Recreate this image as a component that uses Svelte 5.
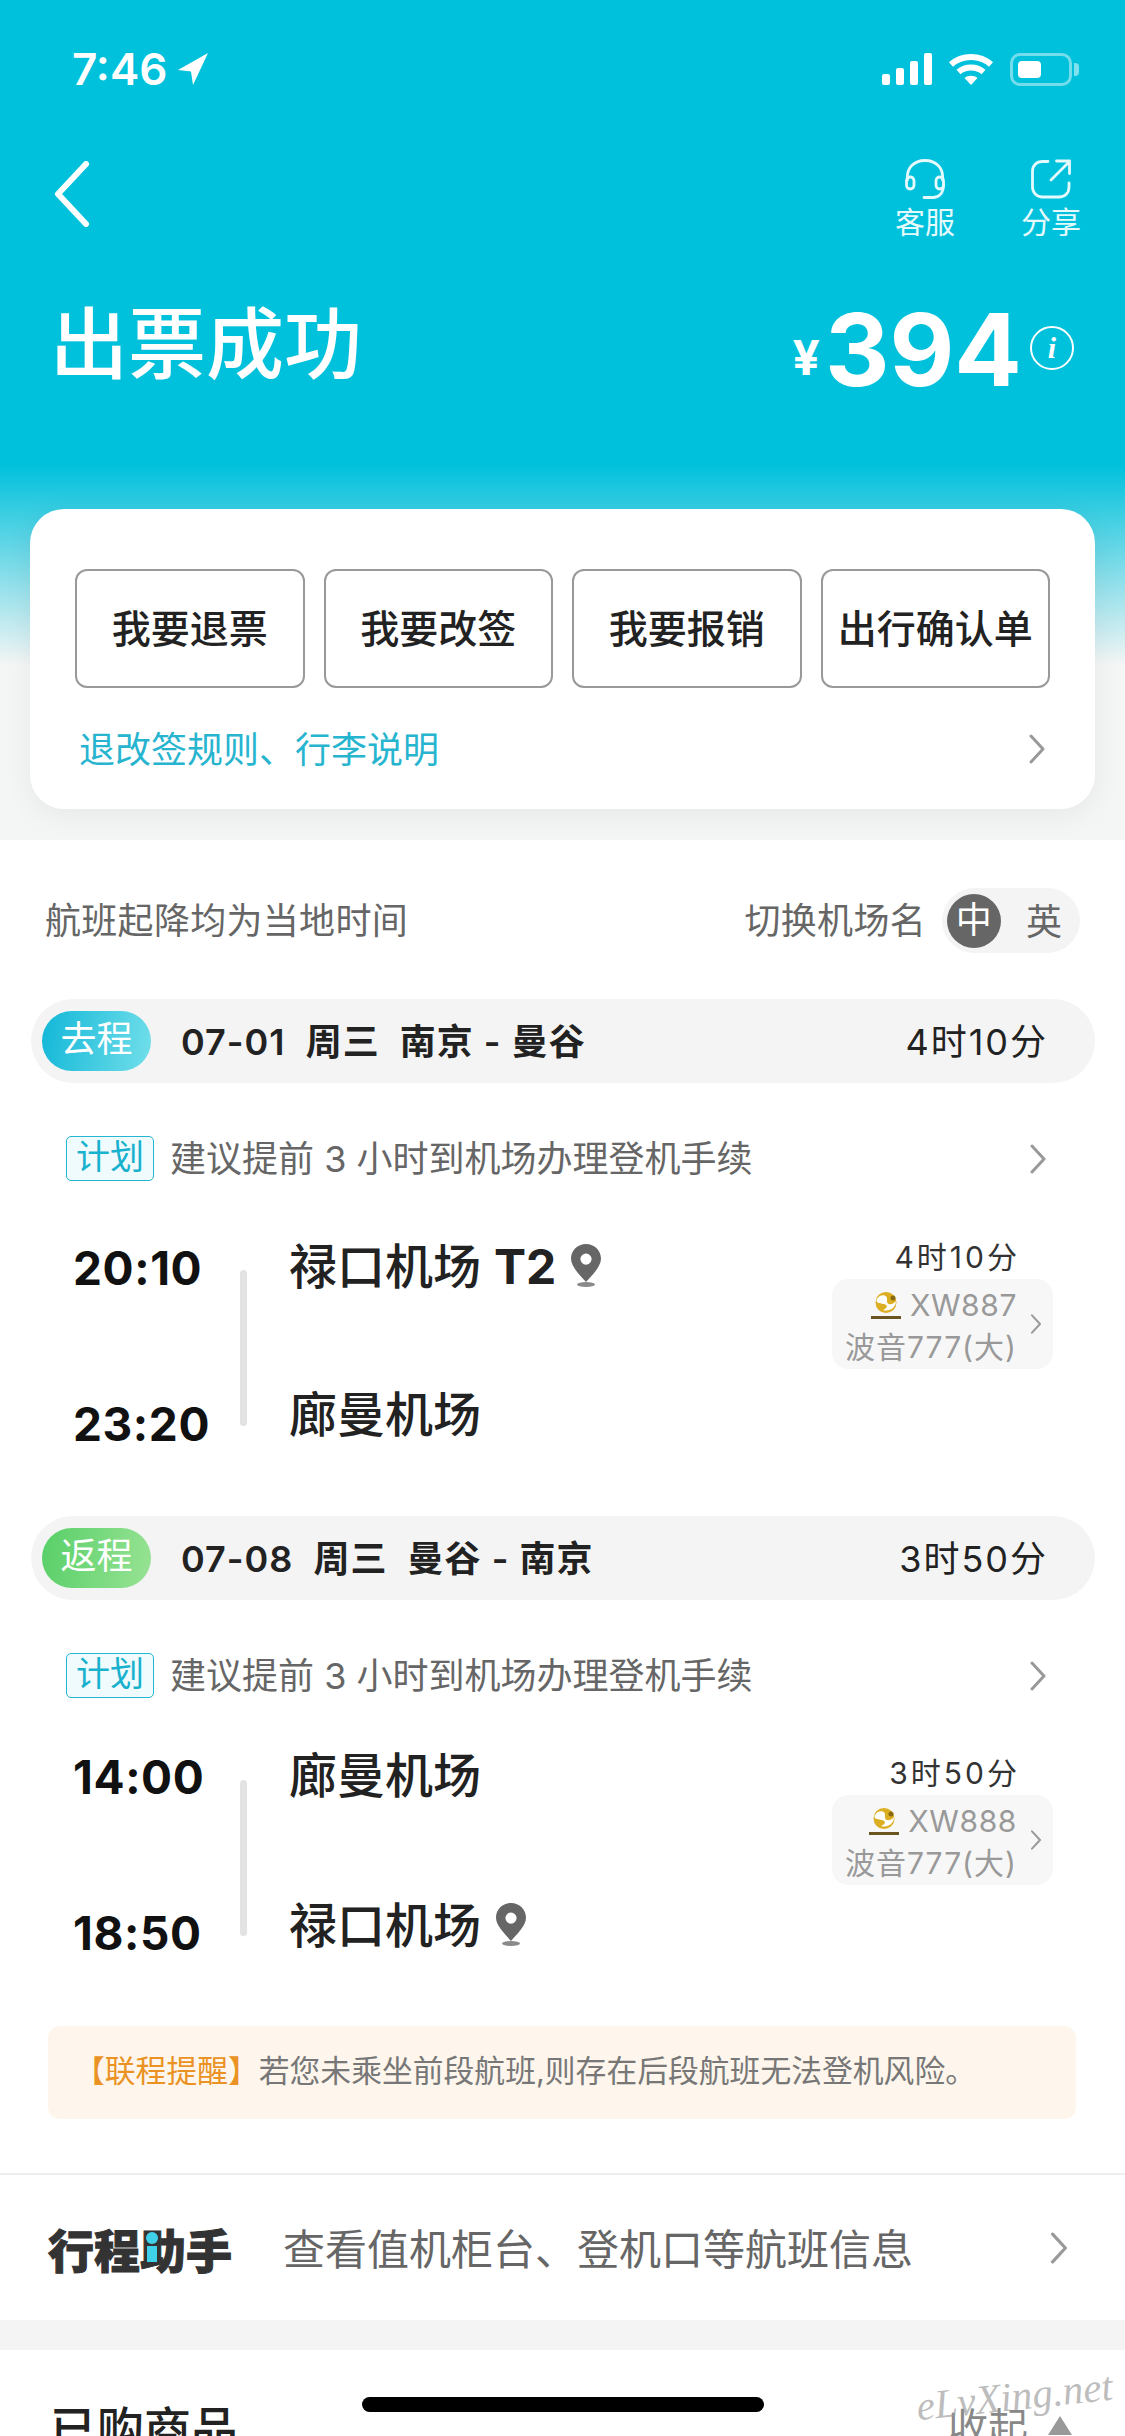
<script lang="ts">
	const actions = ['我要退票', '我要改签', '我要报销', '出行确认单'];
	const segments = [
		{
			key: 'out',
			tag: '去程',
			head: '07-01  周三  南京 - 曼谷',
			total: '4时10分',
			dep: '20:10',
			arr: '23:20',
			from: '禄口机场',
			term: 'T2',
			to: '廊曼机场',
			pinOn: 'from',
			no: 'XW887'
		},
		{
			key: 'ret',
			tag: '返程',
			head: '07-08  周三  曼谷 - 南京',
			total: '3时50分',
			dep: '14:00',
			arr: '18:50',
			from: '廊曼机场',
			term: '',
			to: '禄口机场',
			pinOn: 'to',
			no: 'XW888'
		}
	];
</script>

{#snippet chevron(cls)}
	<svg class={cls} viewBox="0 0 16 30" fill="none">
		<path d="M2 2l12 13L2 28" stroke="currentColor" stroke-width="3" stroke-linecap="round" stroke-linejoin="round" />
	</svg>
{/snippet}

{#snippet pin()}
	<svg class="pin" viewBox="0 0 32 44">
		<path
			fill-rule="evenodd"
			d="M16 1C7.5 1 1 7.6 1 15.6 1 24 10 32 16 39c6-7 15-15 15-23.4C31 7.6 24.5 1 16 1zm0 9.500a5.600 5.600 0 110 11.200 5.600 5.600 0 010-11.200z"
			fill="#666"
		/>
		<ellipse cx="16" cy="41.500" rx="9" ry="2.400" fill="#8a8a8a" />
	</svg>
{/snippet}

<div class="page">
	<header class="hero">
		<div class="status">
			<span class="clock">7:46</span>
			<svg class="loc" viewBox="0 0 30 32"><path d="M30 0L0 17l13 1.500L15 32z" fill="#fff" /></svg>
			<span class="spacer"></span>
			<svg class="signal" viewBox="0 0 50 32" fill="#fff">
				<rect x="0" y="21" width="8" height="11" rx="2" />
				<rect x="14" y="15" width="8" height="17" rx="2" />
				<rect x="28" y="8" width="8" height="24" rx="2" />
				<rect x="42" y="0" width="8" height="32" rx="2" />
			</svg>
			<svg class="wifi" viewBox="0 0 46 33" fill="none" stroke="#fff" stroke-width="6">
				<path d="M3 11.500c11-10 29-10 40 0" />
				<path d="M10.500 19c7-6 18-6 25 0" />
				<path d="M23 32l-6.500-7c3.500-3 9.500-3 13 0z" fill="#fff" stroke="none" />
			</svg>
			<div class="battery"><span class="level"></span></div>
		</div>

		<div class="nav">
			<svg class="nav-back" viewBox="0 0 38 66" fill="none">
				<path d="M34 3L6 33l28 30" stroke="#fff" stroke-width="6" stroke-linecap="round" stroke-linejoin="round" />
			</svg>
			<div class="tools">
				<div class="tool">
					<svg viewBox="0 0 40 40" fill="none" stroke="#e4fafd" stroke-width="2.800" stroke-linecap="round">
						<path d="M2.500 21C1 9 9 1.500 20 1.500S39 9 37.500 21" />
						<rect x="1.500" y="18" width="7.500" height="12" rx="3.700" />
						<rect x="31" y="18" width="7.500" height="12" rx="3.700" />
						<path d="M38.500 26c0 7.500-4 12-10 12.500H19" />
					</svg>
					<span>客服</span>
				</div>
				<div class="tool">
					<svg viewBox="0 0 40 40" fill="none" stroke="#e4fafd" stroke-width="2.800" stroke-linecap="round" stroke-linejoin="round">
						<path d="M17 2.500h-5.500C5.500 2.500 1.500 6.500 1.500 12v16c0 5.500 4 10 10 10H28c6 0 10-4 10-10v-4" />
						<path d="M20 21L38 3M25.500 2h13v12.500" />
					</svg>
					<span>分享</span>
				</div>
			</div>
		</div>

		<div class="summary">
			<h1>出票成功</h1>
			<div class="price">
				<span class="yen">¥</span><span class="amount">394</span>
				<span class="info">i</span>
			</div>
		</div>

		<section class="card">
			<div class="actions">
				{#each actions as a}
					<button>{a}</button>
				{/each}
			</div>
			<div class="rules">
				<span class="lift">退改签规则、行李说明</span>
				{@render chevron('arrow')}
			</div>
		</section>
	</header>

	<main>
		<div class="note">
			<span class="lift">航班起降均为当地时间</span>
			<div class="switch">
				<span class="lift">切换机场名</span>
				<div class="toggle">
					<b>中</b>
					<i>英</i>
				</div>
			</div>
		</div>

		{#each segments as s}
			<div class="bar">
				<span class="badge {s.key}">{s.tag}</span>
				<span class="head lift">{s.head}</span>
				<span class="total lift">{s.total}</span>
			</div>
			<div class="plan">
				<span class="plan-tag">计划</span>
				<span class="plan-text lift">建议提前 3 小时到机场办理登机手续</span>
				{@render chevron('arrow')}
			</div>
			<div class="flight {s.key}">
				<div class="times">
					<span>{s.dep}</span>
					<span>{s.arr}</span>
				</div>
				<div class="rail"></div>
				<div class="ports">
					<div class="port">{s.from}{#if s.term}<b>{s.term}</b>{/if}{#if s.pinOn === 'from'}{@render pin()}{/if}</div>
					<div class="port">{s.to}{#if s.pinOn === 'to'}{@render pin()}{/if}</div>
				</div>
				<div class="side">
					<div class="dur">{s.total}</div>
					<div class="craft">
						<div class="craft-text">
							<div class="no">
								<svg class="logo" viewBox="0 0 30 27">
									<circle cx="15" cy="10.500" r="10.500" fill="#dcae22" />
									<path d="M6 7c4-6 11-4 10 1-1 5 5 6 9 1 0 7-7 11-13 9 5-2 5-5 1-6C8 11 4 11 6 7z" fill="#fff" />
									<circle cx="22" cy="6" r="2.500" fill="#8a6a10" />
									<rect x="0" y="24" width="30" height="3" fill="#6a5520" />
								</svg>
								{s.no}
							</div>
							<div class="model">波音777(大)</div>
						</div>
						{@render chevron('arrow tiny')}
					</div>
				</div>
			</div>
		{/each}

		<div class="alert">
			<span class="alert-key">【联程提醒】</span>若您未乘坐前段航班,则存在后段航班无法登机风险。
		</div>

		<div class="assistant">
			<div class="brand">行程助手<span class="brand-i"></span></div>
			<span class="assistant-text">查看值机柜台、登机口等航班信息</span>
			{@render chevron('arrow big')}
		</div>

		<div class="band"></div>

		<div class="goods">
			<span class="goods-title">已购商品</span>
			<span class="fold">收起<span class="tri"></span></span>
		</div>
	</main>

	<div class="home"></div>
	<div class="mark">eLvXing.net</div>
</div>

<style>
	:global(body) {
		margin: 0;
		background: #fff;
	}
	.page {
		position: relative;
		width: 1125px;
		height: 2436px;
		overflow: hidden;
		background: #fff;
		color: #222;
		font-family: Inter, 'Noto Sans CJK SC', sans-serif;
	}
	.lift {
		margin-bottom: 5px;
	}

	.hero {
		height: 840px;
		box-sizing: border-box;
		padding-top: 52px;
		background: linear-gradient(#00c1dc 0, #00c1dc 465px, #f4f5f5 665px, #f4f5f5 100%);
	}
	.status {
		display: flex;
		align-items: center;
		height: 34px;
		padding: 0 43px 0 72px;
		color: #fff;
	}
	.clock {
		font: 600 44px/34px Inter, sans-serif;
	}
	.loc {
		width: 30px;
		height: 32px;
		margin-left: 11px;
	}
	.spacer {
		flex: 1;
	}
	.signal {
		width: 50px;
		height: 32px;
	}
	.wifi {
		width: 46px;
		height: 33px;
		margin-left: 16px;
	}
	.battery {
		position: relative;
		box-sizing: border-box;
		width: 62px;
		height: 33px;
		margin-left: 16px;
		margin-right: 10px;
		padding: 5px;
		border: 3px solid rgba(255, 255, 255, 0.45);
		border-radius: 10px;
	}
	.battery::after {
		content: '';
		position: absolute;
		top: 7px;
		right: -10px;
		width: 5px;
		height: 13px;
		border-radius: 0 4px 4px 0;
		background: rgba(255, 255, 255, 0.5);
	}
	.level {
		display: block;
		width: 23px;
		height: 100%;
		border-radius: 4px;
		background: #fff;
	}

	.nav {
		display: flex;
		justify-content: space-between;
		margin-top: 72px;
		padding: 0 44px 0 52px;
	}
	.nav-back {
		width: 38px;
		height: 66px;
		margin-top: 3px;
	}
	.tools {
		display: flex;
		gap: 66px;
	}
	.tool {
		display: flex;
		flex-direction: column;
		align-items: center;
		width: 60px;
		color: #e4fafd;
		font-size: 30px;
		line-height: 36px;
	}
	.tool svg {
		width: 40px;
		height: 40px;
		margin-bottom: 5px;
		margin-top: 1px;
	}

	.summary {
		display: flex;
		justify-content: space-between;
		align-items: center;
		height: 110px;
		margin-top: 50px;
		padding: 0 51px 0 50px;
		color: #fff;
	}
	h1 {
		margin: 0;
		font-size: 78px;
		font-weight: 500;
		line-height: 110px;
	}
	.price {
		display: flex;
		align-items: center;
		margin-top: 10px;
		font-weight: 700;
	}
	.yen {
		margin-top: 14px;
		font-size: 48px;
	}
	.amount {
		margin-left: 5px;
		font-size: 100px;
		line-height: 110px;
	}
	.info {
		display: flex;
		justify-content: center;
		box-sizing: border-box;
		width: 44px;
		height: 44px;
		margin: -4px 0 0 8px;
		border: 2px solid #fff;
		border-radius: 50%;
		font: italic 700 30px/40px 'Liberation Serif', serif;
	}

	.card {
		margin: 109px 30px 0;
		height: 300px;
		box-sizing: border-box;
		padding: 60px 45px 0;
		border-radius: 34px;
		background: #fff;
		box-shadow: 0 6px 30px rgba(0, 0, 0, 0.06);
	}
	.actions {
		display: grid;
		grid-template-columns: repeat(4, 1fr);
		gap: 19px;
	}
	button {
		height: 119px;
		padding: 0 0 5px;
		border: 2px solid #999;
		border-radius: 12px;
		background: #fff;
		color: #222;
		font: 500 39px 'Noto Sans CJK SC', sans-serif;
	}
	.rules {
		display: flex;
		justify-content: space-between;
		align-items: center;
		height: 54px;
		margin-top: 34px;
		padding: 0 5px 0 4px;
		color: #27b4cf;
		font-size: 36px;
	}
	.arrow {
		width: 16px;
		height: 30px;
		color: #999;
	}

	.note {
		display: flex;
		justify-content: space-between;
		align-items: center;
		height: 65px;
		margin-top: 48px;
		padding: 0 45px;
		color: #666;
		font-size: 36px;
		letter-spacing: 0.3px;
	}
	.switch {
		display: flex;
		align-items: center;
		gap: 16px;
	}
	.toggle {
		display: flex;
		align-items: center;
		box-sizing: border-box;
		width: 138px;
		height: 65px;
		padding-left: 5px;
		border-radius: 33px;
		background: #f4f4f4;
	}
	.toggle b {
		width: 54px;
		height: 54px;
		border-radius: 50%;
		background: #666;
		color: #fff;
		font-weight: 400;
		line-height: 52px;
		text-align: center;
	}
	.toggle i {
		margin: 0 0 3px 25px;
		font-style: normal;
	}

	.bar {
		display: flex;
		align-items: center;
		height: 84px;
		margin: 46px 30px 0 31px;
		padding: 0 47px 0 11px;
		border-radius: 42px;
		background: #f4f4f4;
		font-size: 36px;
	}
	.flight + .bar {
		margin-top: 0;
	}
	.badge {
		width: 109px;
		height: 60px;
		border-radius: 30px;
		color: #fff;
		line-height: 56px;
		text-align: center;
	}
	.badge.out {
		background: linear-gradient(100deg, #12b7d8, #72dfea);
	}
	.badge.ret {
		background: linear-gradient(100deg, #58cf68, #98e394);
	}
	.head {
		margin-left: 30px;
		flex: 1;
		font-weight: 600;
		letter-spacing: 1px;
		white-space: pre;
		color: #222;
	}
	.total {
		letter-spacing: 2px;
	}
	.plan {
		display: flex;
		align-items: center;
		height: 45px;
		margin-top: 53px;
		padding: 0 79px 0 66px;
		color: #666;
		font-size: 36px;
	}
	.plan-tag {
		box-sizing: border-box;
		width: 88px;
		height: 45px;
		border: 1.500px solid #24b6d2;
		border-radius: 5px;
		background: #f0fbfd;
		color: #18b1ce;
		font-size: 34px;
		line-height: 39px;
		text-align: center;
	}
	.plan-text {
		flex: 1;
		margin-left: 16px;
	}

	.flight {
		display: flex;
		height: 335px;
		padding-left: 73px;
	}
	.flight.ret {
		height: 328px;
	}
	.times {
		display: flex;
		flex-direction: column;
		gap: 100px;
		width: 167px;
		margin-top: 59px;
		font-size: 46px;
		font-weight: 700;
		line-height: 56px;
		letter-spacing: 0.6px;
		color: #111;
	}
	.flight.ret .times {
		margin-top: 51px;
	}
	.rail {
		width: 7px;
		height: 156px;
		margin-top: 89px;
		border-radius: 4px;
		background: #e3e3e3;
	}
	.flight.ret .rail {
		margin-top: 82px;
	}
	.ports {
		display: flex;
		flex-direction: column;
		gap: 88px;
		margin: 56px 0 0 42px;
		font-size: 48px;
		font-weight: 500;
		line-height: 60px;
	}
	.flight.ret .ports {
		gap: 90px;
		margin-top: 48px;
	}
	.port {
		display: flex;
		align-items: flex-start;
		white-space: pre;
	}
	.port b {
		margin-left: 13px;
		font-weight: 700;
	}
	.pin {
		width: 32px;
		height: 44px;
		margin: 6px 0 0 14px;
	}
	.side {
		width: 221px;
		margin: 60px 72px 0 auto;
	}
	.flight.ret .side {
		margin-top: 59px;
	}
	.dur {
		height: 36px;
		padding-right: 33px;
		font-size: 30px;
		line-height: 32px;
		letter-spacing: 3px;
		text-align: right;
		color: #333;
	}
	.craft {
		display: flex;
		align-items: center;
		justify-content: flex-end;
		height: 90px;
		margin-top: 2px;
		padding-right: 11px;
		border-radius: 16px;
		background: #f7f7f7;
		color: #999;
		font-size: 30px;
		line-height: 42px;
	}
	.craft-text {
		margin: 4px 13px 0 0;
		text-align: right;
		letter-spacing: 0.6px;
	}
	.model {
		letter-spacing: 1px;
	}
	.no {
		display: flex;
		align-items: center;
		justify-content: flex-end;
	}
	.logo {
		width: 30px;
		height: 27px;
		margin-right: 9px;
	}
	.arrow.tiny {
		width: 12px;
		height: 20px;
	}

	.alert {
		height: 93px;
		margin: 0 49px 0 48px;
		padding-left: 26px;
		border-radius: 12px;
		background: #fef6ec;
		color: #777;
		font-size: 30.800px;
		line-height: 90px;
		white-space: nowrap;
	}
	.alert-key {
		color: #ea9224;
	}

	.assistant {
		display: flex;
		align-items: center;
		height: 145px;
		margin-top: 54px;
		padding: 0 57px 0 48px;
		border-top: 2px solid #eee;
	}
	.brand {
		position: relative;
		width: 184px;
		color: #333;
		font: 900 46px/60px 'Noto Sans CJK SC', sans-serif;
		-webkit-text-stroke: 1px #333;
		white-space: nowrap;
	}
	.brand-i {
		position: absolute;
		left: 99px;
		top: 28px;
		width: 10px;
		height: 16px;
		background: #3fd0ea;
	}
	.brand-i::before {
		content: '';
		position: absolute;
		left: -1px;
		top: -14px;
		width: 12px;
		height: 12px;
		border-radius: 50%;
		background: #3fd0ea;
	}
	.assistant-text {
		flex: 1;
		margin: 0 0 2px 51px;
		color: #666;
		font-size: 42px;
	}
	.arrow.big {
		width: 18px;
		height: 32px;
	}

	.band {
		height: 30px;
		background: #f4f4f4;
	}
	.goods {
		display: flex;
		justify-content: space-between;
		align-items: center;
		height: 150px;
		padding: 0 53px 0 50px;
	}
	.goods-title {
		font-size: 47px;
		font-weight: 500;
	}
	.fold {
		display: flex;
		align-items: center;
		gap: 20px;
		color: #888;
		font-size: 40px;
	}
	.tri {
		width: 0;
		height: 0;
		border: 12px solid transparent;
		border-top: 0;
		border-bottom: 19px solid #999;
	}

	.home {
		position: absolute;
		left: 362px;
		top: 2397px;
		width: 402px;
		height: 15px;
		border-radius: 8px;
		background: #000;
	}
	.mark {
		position: absolute;
		right: 12px;
		top: 2372px;
		color: rgba(150, 150, 150, 0.65);
		font: italic 41px 'Liberation Serif', serif;
		transform: rotate(-6deg);
	}
</style>
